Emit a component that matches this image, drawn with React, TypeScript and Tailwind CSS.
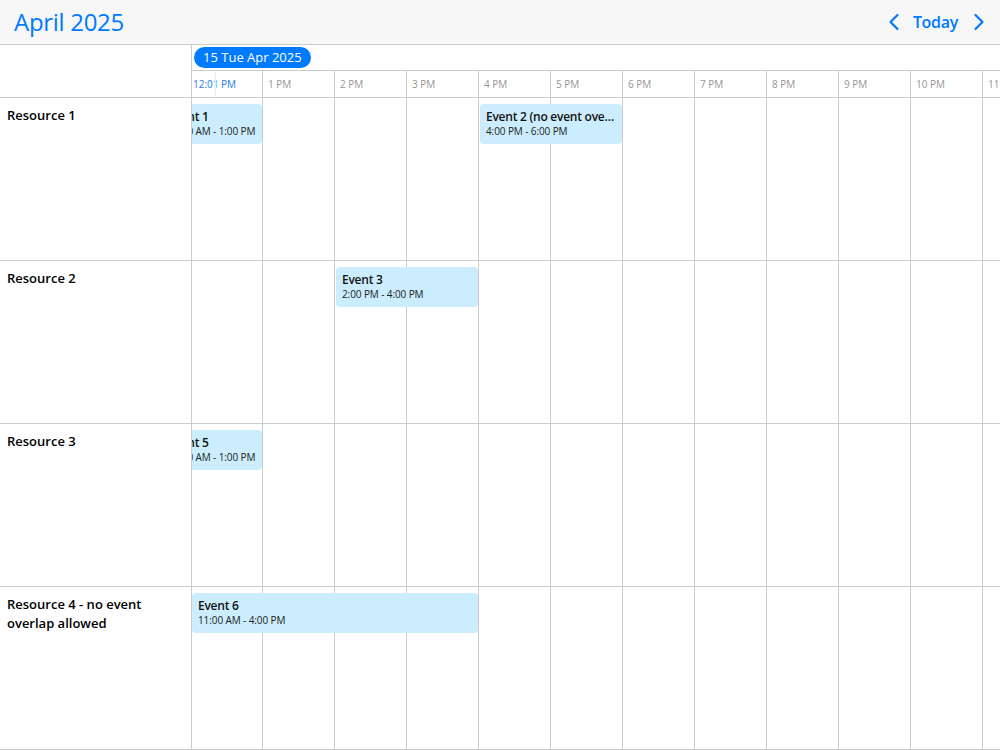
import React from 'react';

interface CalEvent {
  title: string;
  time: string;
  left: number;
  width: number;
}

interface Resource {
  name: string;
  events: CalEvent[];
}

const HOUR = 72;
const hours = ['12:01 PM', '1 PM', '2 PM', '3 PM', '4 PM', '5 PM', '6 PM', '7 PM', '8 PM', '9 PM', '10 PM', '11 PM'];

// offsets are measured from the 12 PM line (timeline is scrolled a bit past it)
const resources: Resource[] = [
  {
    name: 'Resource 1',
    events: [
      { title: 'Event 1', time: '10:00 AM - 1:00 PM', left: -30, width: 100 },
      { title: 'Event 2 (no event overlap)', time: '4:00 PM - 6:00 PM', left: 4 * HOUR, width: 2 * HOUR - 2 }
    ]
  },
  {
    name: 'Resource 2',
    events: [{ title: 'Event 3', time: '2:00 PM - 4:00 PM', left: 2 * HOUR, width: 2 * HOUR - 2 }]
  },
  {
    name: 'Resource 3',
    events: [{ title: 'Event 5', time: '10:00 AM - 1:00 PM', left: -30, width: 100 }]
  },
  {
    name: 'Resource 4 - no event overlap allowed',
    events: [{ title: 'Event 6', time: '11:00 AM - 4:00 PM', left: 0, width: 4 * HOUR - 2 }]
  }
];

const Chevron: React.FC<{ dir: 'left' | 'right' }> = ({ dir }) => (
  <svg width="12" height="18" viewBox="0 0 12 18" fill="none">
    <polyline
      points={dir === 'left' ? '9.5,2 2.5,9 9.5,16' : '2.5,2 9.5,9 2.5,16'}
      stroke="#007aff"
      strokeWidth="2.2"
      strokeLinecap="round"
      strokeLinejoin="round"
    />
  </svg>
);

const EventBox: React.FC<{ event: CalEvent }> = ({ event }) => (
  <div
    className="absolute top-[6px] h-[40px] rounded-[4px] bg-[#ccedfd] pl-[6px] pr-[3px] pt-[5px] overflow-hidden"
    style={{ left: event.left, width: event.width }}
  >
    <div className="text-[12px] leading-[15px] font-semibold text-[#111] tracking-[-0.25px] truncate">{event.title}</div>
    <div className="text-[10px] leading-[14px] text-[#222] tracking-[-0.1px] truncate">{event.time}</div>
  </div>
);

export default function App() {
  return (
    <div className="w-[1000px] h-[750px] overflow-hidden bg-white" style={{ fontFamily: '"Open Sans", "Noto Sans", sans-serif' }}>
      {/* Toolbar */}
      <div className="h-[45px] bg-[#f7f7f7] border-b border-[#cccccc] flex items-center justify-between pl-[14px] pr-[15px]">
        <div className="text-[24px] leading-none text-[#007aff] tracking-[-0.3px]">April 2025</div>
        <div className="flex items-center">
          <button>
            <Chevron dir="left" />
          </button>
          <button className="ml-[13px] text-[16px] font-semibold text-[#007aff] leading-none tracking-[-0.3px]">Today</button>
          <button className="ml-[15px]">
            <Chevron dir="right" />
          </button>
        </div>
      </div>

      <div className="flex">
        {/* Resource column */}
        <div className="w-[192px] shrink-0 border-r border-[#cccccc]">
          <div className="h-[53px] border-b border-[#cccccc]" />
          {resources.map((r) => (
            <div key={r.name} className="h-[163px] border-b border-[#cccccc] pl-[7px] pr-[10px] pt-[8px]">
              <div className="text-[13px] leading-[19px] font-semibold text-black">{r.name}</div>
            </div>
          ))}
        </div>

        {/* Timeline */}
        <div className="flex-1 overflow-hidden">
          <div className="h-[26px] border-b border-[#cccccc] flex items-center pl-[2px]">
            <span className="h-[21px] px-[9px] rounded-full bg-[#007aff] text-white text-[13px] leading-[21px] whitespace-nowrap">
              15 Tue Apr 2025
            </span>
          </div>
          <div className="h-[27px] border-b border-[#cccccc] flex relative">
            {hours.map((h, i) => (
              <div
                key={h}
                className={`shrink-0 border-r border-[#cccccc] flex items-center text-[10px] ${
                  i === 0 ? 'w-[71px] pl-[1px] text-[#1a7cf0]' : 'w-[72px] pl-[5px] text-[#959595]'
                }`}
              >
                {h}
              </div>
            ))}
            <div className="absolute left-[23px] top-0 h-full w-px bg-[#e3f0ff]" />
          </div>
          {resources.map((r) => (
            <div key={r.name} className="h-[163px] border-b border-[#cccccc] relative flex">
              {hours.map((h, i) => (
                <div key={h} className={`shrink-0 border-r border-[#cccccc] h-full ${i === 0 ? 'w-[71px]' : 'w-[72px]'}`} />
              ))}
              {r.events.map((e) => (
                <EventBox key={e.title} event={e} />
              ))}
            </div>
          ))}
        </div>
      </div>
    </div>
  );
}
